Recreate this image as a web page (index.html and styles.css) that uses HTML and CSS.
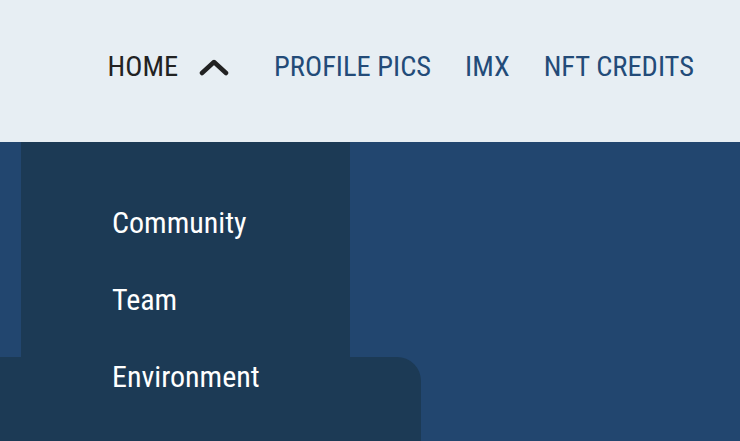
FILE: index.html
```html
<!DOCTYPE html>
<html lang="en">
<head>
  <meta charset="UTF-8">
  <meta name="viewport" content="width=device-width, initial-scale=1.0">
  <title>Menu</title>
  <link rel="stylesheet" href="styles.css">
</head>
<body>
  <!-- Barra de navegação -->
  <header class="top-bar">
    <nav class="nav">
      <div class="nav-item home">
        <span>HOME</span>
        <svg class="chevron" width="30" height="20" viewBox="0 0 30 20">
          <path d="M3 16 L15 5 L27 16" fill="none" stroke="#222" stroke-width="4.5" stroke-linecap="round" stroke-linejoin="round"/>
        </svg>
      </div>
      <a class="nav-item" href="#">PROFILE PICS</a>
      <a class="nav-item" href="#">IMX</a>
      <a class="nav-item" href="#">NFT CREDITS</a>
    </nav>
  </header>

  <!-- Conteúdo -->
  <main class="content">
    <div class="card"></div>

    <!-- Menu suspenso -->
    <ul class="dropdown">
      <li><a href="#">Community</a></li>
      <li><a href="#">Team</a></li>
      <li><a href="#">Environment</a></li>
    </ul>
  </main>
</body>
</html>
```

FILE: styles.css
```css
html, body {
  margin: 0;
  padding: 0;
  height: 100%;
  overflow: hidden;
}
body {
  font-family: "Liberation Sans Narrow", "Roboto Condensed", "DejaVu Sans", sans-serif;
  background: #22466f;
}
/* Barra de navegação */
.top-bar {
  height: 142px;
  background: #e7eef3;
  display: flex;
  justify-content: flex-end;
  align-items: center;
  padding-right: 46px;
  padding-bottom: 8px;
  box-sizing: border-box;
}
.nav {
  display: flex;
  align-items: center;
  gap: 34px;
}
.nav-item {
  font-size: 28.5px;
  color: #234b78;
  text-decoration: none;
  line-height: 1;
}
.nav-item.home {
  display: flex;
  align-items: center;
  gap: 21px;
  color: #222;
  margin-right: 11px;
}
.chevron {
  display: block;
}
/* Conteúdo */
.content {
  position: relative;
  height: calc(100% - 142px);
  padding-top: 215px;
  box-sizing: border-box;
}
.card {
  width: 421px;
  height: 100%;
  background: #1c3a55;
  border-top-right-radius: 24px;
}
.dropdown {
  position: absolute;
  top: 0;
  left: 21px;
  width: 329px;
  height: 100%;
  margin: 0;
  padding: 66px 0 0 91px;
  box-sizing: border-box;
  list-style: none;
  background: #1c3a55;
}
.dropdown li {
  height: 77px;
}
.dropdown a {
  color: #fff;
  font-size: 30px;
  text-decoration: none;
  line-height: 1;
}
```
